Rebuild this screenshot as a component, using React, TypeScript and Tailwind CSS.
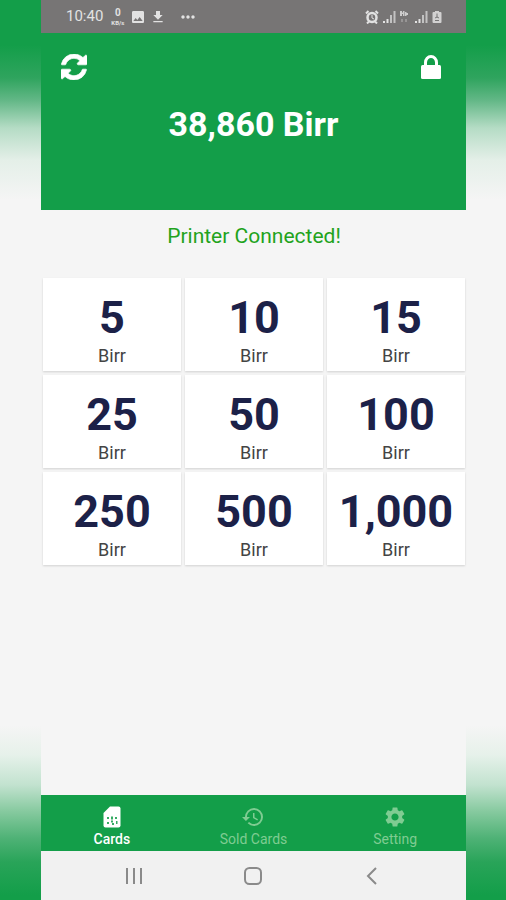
import classNames from "clsx";
import React from "react";
import {
  MdDownload,
  MdHistory,
  MdImage,
  MdMoreHoriz,
  MdSettings,
} from "react-icons/md";

const AMOUNTS = [5, 10, 15, 25, 50, 100, 250, 500, 1000];

const SimIcon = ({ className }: { className?: string }) => (
  <svg className={className} viewBox="0 0 24 24" fill="currentColor">
    <path d="M10 1.500h8.500q2 0 2 2v17q0 2-2 2h-13q-2 0-2-2V8z" />
    <path
      d="M7 12h2v2H7zM11 11.500h2v3h-2zM15 12h2v2h-2zM7 17h2v2H7zM11 15.500h2v2h-2zM12 18h2v2h-2zM16 16h1.500v3H16z"
      fill="#139e49"
      opacity=".85"
    />
  </svg>
);

const TABS = [
  { label: "Cards", Icon: SimIcon },
  { label: "Sold Cards", Icon: MdHistory },
  { label: "Setting", Icon: MdSettings },
];

const RefreshIcon = () => (
  <svg width="26" height="26" viewBox="0 0 1536 1536" fill="currentColor" stroke="currentColor" strokeWidth="40">
    <path d="M1511 928q0 5-1 7-64 268-268 434.500t-478 166.500q-146 0-282.500-55t-243.500-157l-129 129q-19 19-45 19t-45-19-19-45v-448q0-26 19-45t45-19h448q26 0 45 19t19 45-19 45l-137 137q71 66 161 102t187 36q134 0 250-65t186-179q11-17 53-117 8-23 30-23h192q13 0 22.500 9.500t9.500 22.500zm25-800v448q0 26-19 45t-45 19h-448q-26 0-45-19t-19-45 19-45l138-138q-148-137-349-137-134 0-250 65t-186 179q-11 17-53 117-8 23-30 23h-199q-13 0-22.500-9.500t-9.500-22.500v-7q65-268 270-434.500t480-166.500q146 0 284 55.500t245 156.500l130-129q19-19 45-19t45 19 19 45z" />
  </svg>
);

const LockIcon = () => (
  <svg width="20" height="24" viewBox="0 0 20 24" fill="none">
    <path
      d="M4.500 12V7.500a5.500 6 0 0 1 11 0V12"
      stroke="currentColor"
      strokeWidth="3"
    />
    <rect y="10" width="20" height="14" rx="1.500" fill="currentColor" />
  </svg>
);

const AlarmIcon = () => (
  <svg width="14" height="14" viewBox="0 0 14 14" stroke="currentColor" fill="none">
    <circle cx="7" cy="7.500" r="4.500" strokeWidth="2.500" />
    <path d="M7 5v3l2 1" />
    <path d="M1 3.500L3.500 1M13 3.500L10.500 1M2 13.500L4 11.500M12 13.500L10 11.500" strokeWidth="2" />
  </svg>
);

const SignalIcon = () => (
  <svg width="13" height="14" viewBox="0 0 13 14" fill="currentColor">
    <path d="M0 11h2v2H0zM3.500 9h2v4h-2z" />
    <path d="M7 5h2v8H7zM10.500 1h2v12h-2z" opacity=".7" />
  </svg>
);

const DataIcon = () => (
  <svg width="9" height="14" viewBox="0 0 9 14" fill="currentColor">
    <path d="M0 1h2v1.500h1V1h1.500v5H3V4H2v2H0zM5 2h1.500v1H8v2H6.500v1H5z" opacity=".8" />
    <path d="M1 9h2v3H1zM5 9h2v3H5z" opacity=".3" />
  </svg>
);

const BatteryIcon = () => (
  <svg width="10" height="14" viewBox="0 0 10 14">
    <path
      d="M3 1h4v1h1.500q1 0 1 1v9q0 1-1 1h-7q-1 0-1-1V3q0-1 1-1H3z"
      fill="currentColor"
      opacity=".85"
    />
    <path d="M5 3.500v4M3 8l2-1 2 1M3 10.500h4" stroke="#757575" fill="none" />
  </svg>
);

const StatusBar = () => (
  <div className="flex h-[33px] items-center justify-between bg-[#777575] pr-6 pl-[25px] text-[#e2e2e2]">
    <div className="flex items-center">
      <span className="text-[15px]">10:40</span>
      <div className="ml-2 flex flex-col items-center font-bold">
        <span className="text-[10px] leading-3">0</span>
        <span className="text-[6px] leading-2">KB/s</span>
      </div>
      <MdImage className="ml-1.5 size-4" />
      <MdDownload className="ml-1 size-4" />
      <MdMoreHoriz className="ml-3 size-5" />
    </div>
    <div className="flex items-center">
      <AlarmIcon />
      <span className="ml-1"><SignalIcon /></span>
      <span className="ml-1"><DataIcon /></span>
      <span className="ml-1.5"><SignalIcon /></span>
      <span className="ml-1"><BatteryIcon /></span>
    </div>
  </div>
);

const Header = () => (
  <header className="h-[177px] bg-[#139e49] px-5 pt-[21px] text-white">
    <div className="flex items-center justify-between">
      <button type="button" aria-label="Refresh">
        <RefreshIcon />
      </button>
      <button type="button" aria-label="Lock" className="pr-[5px]">
        <LockIcon />
      </button>
    </div>
    <h1 className="mt-6 text-center text-[34px] leading-10 font-bold">
      38,860 Birr
    </h1>
  </header>
);

const AmountCard: React.FC<{ amount: number }> = ({ amount }) => (
  <button
    type="button"
    className="flex h-[93px] flex-col items-center bg-white pt-4 shadow-[0_1px_2px_rgba(0,0,0,0.15)]"
  >
    <span className="text-[45px] leading-[48px] font-bold text-[#1c2148]">
      {amount.toLocaleString("en-US")}
    </span>
    <span className="text-lg leading-7 text-[#444444]">Birr</span>
  </button>
);

const TabBar = () => (
  <nav className="grid h-14 grid-cols-3 bg-[#139e49]">
    {TABS.map(({ label, Icon }, i) => (
      <a
        key={label}
        href="#"
        className={classNames(
          "flex flex-col items-center pt-2.5 text-sm",
          i === 0 ? "font-medium text-white" : "text-[#7fcc92]"
        )}
      >
        <Icon className="size-6" />
        <span>{label}</span>
      </a>
    ))}
  </nav>
);

const SystemNav = () => (
  <div className="grid h-[49px] grid-cols-[1fr_auto_1fr] items-center bg-[#f1f1f1] pr-0.5 text-[#8a8a8a]">
    <button type="button" aria-label="Recent apps" className="mr-[102px] justify-self-end">
      <svg width="16" height="18" viewBox="0 0 16 18" stroke="currentColor" strokeWidth="2">
        <path d="M1 1v16M8 1v16M15 1v16" />
      </svg>
    </button>
    <button type="button" aria-label="Home">
      <svg width="18" height="18" viewBox="0 0 18 18" fill="none" stroke="currentColor" strokeWidth="2">
        <rect x="1" y="1" width="16" height="16" rx="4.500" />
      </svg>
    </button>
    <button type="button" aria-label="Back" className="ml-[104px] justify-self-start">
      <svg width="11" height="18" viewBox="0 0 11 18" fill="none" stroke="currentColor" strokeWidth="2">
        <path d="M10 1L2 9l8 8" />
      </svg>
    </button>
  </div>
);

const App: React.FC = () => {
  return (
    <div className="min-h-screen bg-[linear-gradient(to_bottom,#139e49_0,#139e49_45px,#2fa45e_78px,#62b786_100px,#b5dcc5_128px,#e4efe8_160px,#f5f5f5_200px,#f5f5f5_725px,#e6f1ea_755px,#c2e2cf_785px,#85c99e_812px,#4fb276_838px,#29a459_862px,#139e49_895px)] pr-10 pl-[41px] font-['Roboto','Liberation_Sans',sans-serif]">
      <div className="flex min-h-screen flex-col bg-[#f5f5f5]">
        <StatusBar />
        <Header />
        <main className="flex-1 pr-px pl-0.5">
          <p className="pt-2.5 text-center text-[21px] leading-8 text-[#22a31c]">
            Printer Connected!
          </p>
          <div className="mt-[26px] grid grid-cols-3 gap-1">
            {AMOUNTS.map((amount) => (
              <AmountCard key={amount} amount={amount} />
            ))}
          </div>
        </main>
        <TabBar />
        <SystemNav />
      </div>
    </div>
  );
};

export default App;
